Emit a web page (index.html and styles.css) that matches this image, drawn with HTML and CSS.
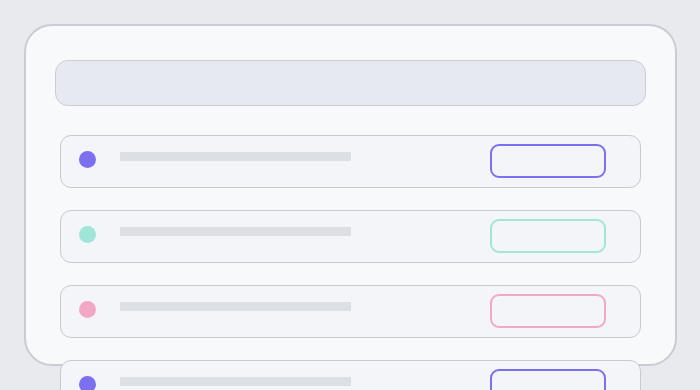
FILE: index.html
```html
<!DOCTYPE html>
<html>
<head>
<meta charset="utf-8">
<link rel="stylesheet" href="styles.css">
</head>
<body>
<div class="card">
  <div class="header"></div>
  <div class="list">
    <div class="row"><span class="dot purple"></span><span class="line"></span><span class="btn purple-b"></span></div>
    <div class="row"><span class="dot teal"></span><span class="line"></span><span class="btn teal-b"></span></div>
    <div class="row"><span class="dot pink"></span><span class="line"></span><span class="btn pink-b"></span></div>
    <div class="row"><span class="dot purple"></span><span class="line"></span><span class="btn purple-b"></span></div>
  </div>
</div>
</body>
</html>
```
FILE: styles.css
```css
html, body { margin: 0; padding: 0; }
body {
  background: #e9eaed;
  width: 700px;
  height: 390px;
  overflow: hidden;
  font-family: "Liberation Sans", Arial, sans-serif;
}
.card {
  margin: 24px 0 0 24px;
  border: 2px solid #c9ccd2;
  border-radius: 28px;
  background: #f8f9fb;
  padding: 34px 29px 0 29px;
  box-sizing: border-box;
  width: 653px;
  height: 342px;
}
.header {
  height: 46px;
  border: 1px solid #c9ccd6;
  border-radius: 13px;
  background: #e7e9f1;
  box-sizing: border-box;
}
.list {
  margin: 29px 5px 0 5px;
  display: flex;
  flex-direction: column;
  gap: 22px;
}
.row {
  flex: none;
  height: 53px;
  box-sizing: border-box;
  border: 1px solid #c8cad0;
  border-radius: 11px;
  background: #f4f5f9;
  display: flex;
  align-items: flex-start;
}
.dot {
  width: 17px;
  height: 17px;
  border-radius: 50%;
  margin: 15px 0 0 18px;
  flex: none;
}
.line {
  width: 231px;
  height: 9px;
  background: #dcdfe4;
  margin: 16px 0 0 24px;
  flex: none;
}
.btn {
  width: 116px;
  height: 34px;
  box-sizing: border-box;
  border: 2px solid;
  border-radius: 9px;
  margin: 8px 0 0 139px;
  flex: none;
}
.purple { background: #7c6ff0; }
.teal { background: #9fe6d9; }
.pink { background: #f2a8c4; }
.purple-b { border-color: #7c6ff0; }
.teal-b { border-color: #9fe6d9; }
.pink-b { border-color: #f2a8c4; }
```
